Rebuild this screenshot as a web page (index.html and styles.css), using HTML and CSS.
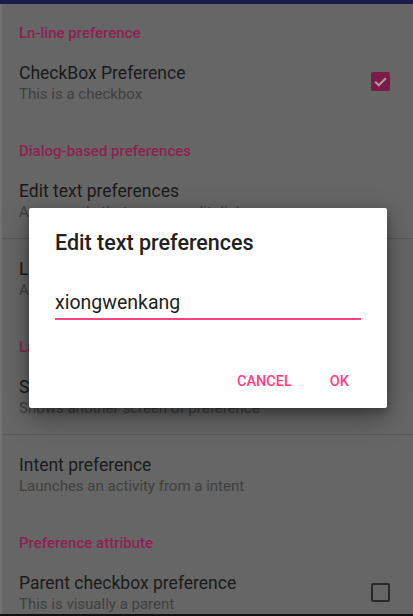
FILE: index.html
```html
<!DOCTYPE html>
<html>
<head>
<meta charset="utf-8">
<link rel="stylesheet" href="styles.css">
</head>
<body>
<div class="screen">
  <div class="topbar"></div>
  <div class="list">
    <div class="category first">Ln-line preference</div>
    <div class="item">
      <div class="text">
        <div class="title">CheckBox Preference</div>
        <div class="summary">This is a checkbox</div>
      </div>
      <div class="checkbox checked">
        <svg viewBox="0 0 19 19" width="19" height="19"><path d="M4.2 9.8 L7.8 13.2 L14.8 6.2" fill="none" stroke="#b497a4" stroke-width="2.2"/></svg>
      </div>
    </div>
    <div class="category">Dialog-based preferences</div>
    <div class="item">
      <div class="text">
        <div class="title">Edit text preferences</div>
        <div class="summary">An example that uses an edit dialog</div>
      </div>
    </div>
    <div class="divider"></div>
    <div class="item">
      <div class="text">
        <div class="title">List preference</div>
        <div class="summary">An example that uses a list dialog</div>
      </div>
    </div>
    <div class="category">Launch preferences</div>
    <div class="item">
      <div class="text">
        <div class="title">Screen preference</div>
        <div class="summary">Shows another screen of preference</div>
      </div>
    </div>
    <div class="divider"></div>
    <div class="item">
      <div class="text">
        <div class="title">Intent preference</div>
        <div class="summary">Launches an activity from a intent</div>
      </div>
    </div>
    <div class="category">Preference attribute</div>
    <div class="item">
      <div class="text">
        <div class="title">Parent checkbox preference</div>
        <div class="summary">This is visually a parent</div>
      </div>
      <div class="checkbox"></div>
    </div>
  </div>
  <div class="bottombar"></div>

  <div class="dialog">
    <div class="dialog-title">Edit text preferences</div>
    <div class="dialog-input">xiongwenkang</div>
    <div class="dialog-actions">
      <span class="btn">CANCEL</span>
      <span class="btn">OK</span>
    </div>
  </div>
</div>
</body>
</html>
```
FILE: styles.css
```css
html, body {
  margin: 0;
  padding: 0;
}
body {
  font-family: Roboto, "Noto Sans", sans-serif;
  background: #666666;
}
.screen {
  position: relative;
  width: 413px;
  height: 616px;
  display: flex;
  flex-direction: column;
  overflow: hidden;
  background: #666666;
}
.topbar {
  height: 4px;
  background: #1a1d4a;
  flex: none;
}
.list {
  flex: 1;
  overflow: hidden;
  border-left: 2px solid #727272;
}
.bottombar {
  height: 2px;
  background: #111111;
  flex: none;
}
.category {
  padding: 21px 0 0 17px;
  line-height: 20px;
  font-size: 15px;
  font-weight: 500;
  color: #8e2151;
}
.category.first {
  padding-top: 19px;
}
.item {
  display: flex;
  align-items: center;
  padding: 19px 23px 16px 17px;
}
.text {
  flex: 1;
}
.title {
  font-size: 17.5px;
  line-height: 22px;
  color: #1a1a1a;
}
.summary {
  font-size: 15px;
  line-height: 20px;
  color: #404040;
}
.divider {
  height: 1px;
  background: #5a5a5a;
  margin-left: -2px;
}
.checkbox {
  width: 15px;
  height: 15px;
  border: 2px solid #282828;
  border-radius: 2px;
  flex: none;
  margin-top: -2px;
}
.checkbox.checked {
  width: 19px;
  height: 19px;
  border: none;
  background: #7b1c47;
  margin-top: -4px;
}
.checkbox svg {
  display: block;
}
.dialog {
  position: absolute;
  left: 29px;
  top: 208px;
  width: 306px;
  padding: 21px 26px 16px 26px;
  background: #ffffff;
  border-radius: 2px;
  box-shadow: 0 10px 28px rgba(0, 0, 0, 0.35), 0 4px 10px rgba(0, 0, 0, 0.25);
}
.dialog-title {
  font-size: 21.5px;
  line-height: 28px;
  font-weight: 500;
  color: #212121;
}
.dialog-input {
  margin-top: 33px;
  font-size: 19.5px;
  line-height: 26px;
  padding-bottom: 2px;
  color: #212121;
  border-bottom: 2px solid #ff4081;
}
.dialog-actions {
  margin-top: 52px;
  display: flex;
  justify-content: flex-end;
  gap: 38px;
  padding-right: 12px;
  line-height: 20px;
}
.btn {
  font-size: 14.5px;
  font-weight: 500;
  color: #ff4081;
}
```
